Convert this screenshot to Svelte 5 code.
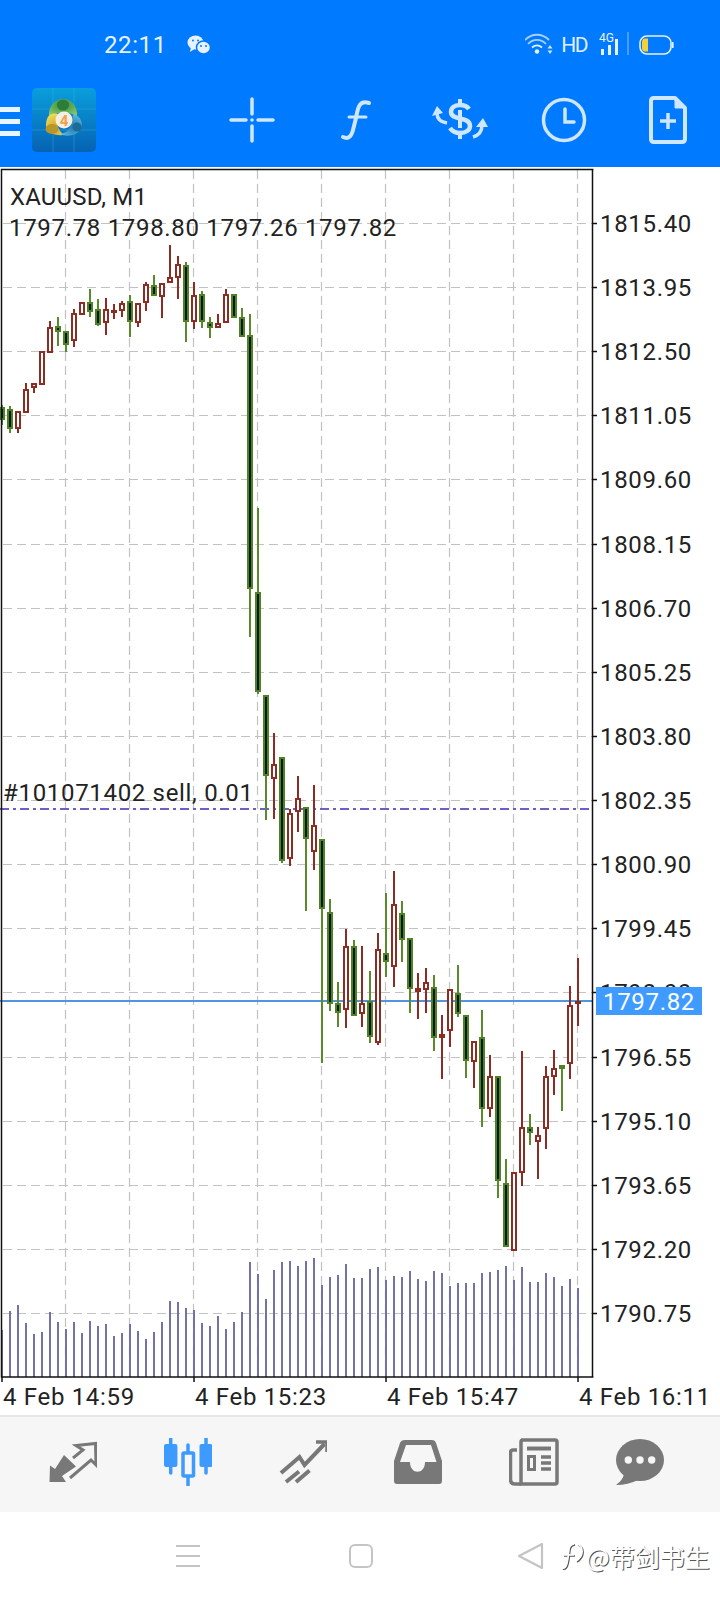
<script lang="ts">
  // candles: [kind, high, body top, body bottom, low], 8px apart, pixel coords of the page
  type candle = [string, number, number, number, number];
  const candles: candle[] = [
    ['d',405,407,420,425],['d',406,409,429,433],['u',411,411,429,433],['u',383,389,413,413],
    ['u',383,383,388,393],['u',351,351,385,385],['u',321,327,353,353],['d',317,326,332,346],
    ['d',331,331,345,352],['u',309,313,341,347],['u',302,302,315,315],['d',289,302,312,317],
    ['d',299,309,325,326],['u',298,309,323,335],['u',304,310,313,319],['u',301,303,311,317],
    ['d',295,301,322,337],['u',303,303,323,327],['u',282,284,303,311],['d',275,285,296,296],
    ['u',283,283,297,318],['u',245,277,283,283],['u',256,264,278,299],['d',262,265,322,342],
    ['u',282,295,322,329],['d',291,294,322,328],['d',317,322,328,338],['u',314,323,328,328],
    ['u',289,294,323,323],['d',294,294,318,318],['d',308,317,337,337],['d',314,335,589,637],
    ['d',508,592,692,694],['d',695,695,776,820],['u',733,764,779,819],['d',757,757,861,863],
    ['u',809,813,859,866],['u',776,798,812,832],['d',807,807,839,911],['u',785,825,852,870],
    ['d',839,839,909,1063],['d',899,912,1004,1011],['d',982,1003,1013,1027],['u',929,946,1010,1028],
    ['d',940,946,1016,1016],['u',946,1003,1014,1027],['d',971,1001,1037,1043],['u',933,949,1043,1045],
    ['d',893,953,962,977],['u',871,904,967,987],['d',901,913,940,962],['d',938,938,989,1013],
    ['u',973,988,992,1019],['u',968,982,990,1013],['d',975,987,1038,1051],['u',1015,1034,1038,1079],
    ['u',989,989,1031,1047],['d',965,993,1014,1017],['d',1015,1015,1061,1078],['u',1041,1041,1062,1088],
    ['d',1010,1037,1109,1127],['u',1055,1076,1109,1117],['d',1076,1076,1181,1198],['d',1159,1183,1247,1247],
    ['u',1172,1172,1251,1251],['u',1051,1127,1173,1186],['d',1114,1127,1133,1145],['u',1127,1135,1142,1179],
    ['u',1066,1076,1129,1149],['u',1050,1068,1077,1095],['d',1065,1065,1069,1111],['u',986,1005,1064,1079],
    ['u',958,1001,1004,1026]
  ];
  const volumes = [
    1330,1311,1305,1323,1334,1332,1312,1322,1329,1322,1333,1321,1326,1324,1336,1333,1324,1331,1339,1332,
    1322,1301,1302,1308,1310,1323,1326,1316,1329,1322,1312,1262,1274,1299,1270,1262,1261,1266,1261,1258,
    1285,1277,1275,1264,1278,1278,1269,1267,1280,1276,1277,1271,1279,1281,1271,1273,1286,1283,1283,1283,
    1273,1272,1270,1266,1280,1267,1282,1282,1273,1277,1286,1279,1288
  ];
  const cx = (k: number) => 2 + 8 * k;
  const gridX = [1, 2, 3, 4, 5, 6, 7, 8, 9].map((k) => 1.5 + 64 * k);
  const levels = Array.from({ length: 18 }, (_, i) => ({
    y: Math.round(223 + 64.12 * i) + 0.5,
    label: (1815.4 - 1.45 * i).toFixed(2)
  }));
  const times = [
    { x: 2, label: '4 Feb 14:59' },
    { x: 194, label: '4 Feb 15:23' },
    { x: 386, label: '4 Feb 15:47' },
    { x: 578, label: '4 Feb 16:11' }
  ];
</script>

<div class="page">
  <header class="top">
    <div class="status">
      <span class="clock">22:11</span>
      <svg class="wechat" width="24" height="20" viewBox="0 0 24 20">
        <ellipse cx="8.5" cy="7.5" rx="8" ry="7" fill="#e6f2ff" />
        <path d="M4 12 L3 17 L9 13 Z" fill="#e6f2ff" />
        <circle cx="6" cy="5.5" r="1" fill="#007aff" />
        <circle cx="11" cy="5.5" r="1" fill="#007aff" />
        <ellipse cx="16.5" cy="12.5" rx="7" ry="6.5" fill="#e6f2ff" stroke="#007aff" stroke-width="1.5" />
        <circle cx="14" cy="11" r="1" fill="#007aff" />
        <circle cx="19" cy="11" r="1" fill="#007aff" />
      </svg>
      <span class="spring"></span>
      <svg class="wifi" width="28" height="22" viewBox="0 0 28 22" fill="none" stroke="#a9d0ff" stroke-width="1.8">
        <path d="M0 7 C7 0 17 0 24 7" />
        <path d="M3 11 C8 5.5 16 5.5 21 11" />
        <path d="M7 14.5 C10 12 14 12 17 14.5" stroke="#e6f2ff" />
        <circle cx="12" cy="18.5" r="2.2" fill="#e6f2ff" stroke="none" />
        <path d="M25 12 L27.5 15.5 H22.5 Z M25 21 L27.5 17.5 H22.5 Z" fill="#cfe6ff" stroke="none" />
      </svg>
      <span class="hd">HD</span>
      <svg class="signal" width="30" height="24" viewBox="0 0 30 24">
        <text x="0" y="10" class="lte">4G</text>
        <rect x="2" y="17" width="3" height="6" fill="#e6f2ff" />
        <rect x="9" y="13" width="3" height="10" fill="#e6f2ff" />
        <rect x="16" y="7" width="3" height="16" fill="#e6f2ff" />
        <rect x="28" y="0" width="2" height="23" fill="#4c9dff" />
      </svg>
      <svg class="battery" width="35" height="20" viewBox="0 0 35 20">
        <rect x="1" y="1" width="31" height="18" rx="7" fill="none" stroke="#e6f2ff" stroke-width="1.6" />
        <rect x="33" y="7" width="1.6" height="6" fill="#e6f2ff" />
        <path d="M9 3.5 H6 Q3 3.5 3 7 V13 Q3 16.5 6 16.5 H9 Z" fill="#f5d03c" />
      </svg>
    </div>
    <div class="toolbar">
      <div class="burger"><i></i><i></i><i></i></div>
      <svg class="logo" width="64" height="64" viewBox="0 0 64 64">
        <defs>
          <linearGradient id="lg" x1="0" y1="0" x2="0" y2="1">
            <stop offset="0" stop-color="#0a9fdc" />
            <stop offset="1" stop-color="#0662b2" />
          </linearGradient>
          <radialGradient id="gr" cx="0.5" cy="0.3" r="0.7">
            <stop offset="0" stop-color="#2f8f3f" />
            <stop offset="1" stop-color="#8cc66a" />
          </radialGradient>
          <radialGradient id="yl" cx="0.5" cy="0.7" r="0.7">
            <stop offset="0" stop-color="#c9a62c" />
            <stop offset="1" stop-color="#f0da5a" />
          </radialGradient>
          <radialGradient id="bl" cx="0.6" cy="0.6" r="0.7">
            <stop offset="0" stop-color="#1e7cae" />
            <stop offset="1" stop-color="#6cc0e6" />
          </radialGradient>
        </defs>
        <rect width="64" height="64" rx="5" fill="url(#lg)" />
        <path d="M21 0V64M42 0V64M0 21H64M0 42H64" stroke="#4bb4e6" stroke-width="1" opacity="0.35" />
        <path d="M17 29 C16 17 24 11 31 11 C39 11 46 18 45 29 C40 23 24 23 17 29 Z" fill="url(#gr)" />
        <ellipse cx="31" cy="17" rx="6" ry="5.5" fill="#2c7d3a" />
        <path d="M26 26 C17 24 14 30 14 38 C13 44 22 48 32 47 C26 42 23 35 26 26 Z" fill="url(#yl)" />
        <ellipse cx="20" cy="41" rx="6.5" ry="5" fill="#b8962a" />
        <path d="M41 26 C49 28 52 36 48 42 C44 48 35 49 28 46 C37 45 41 37 41 26 Z" fill="url(#bl)" />
        <circle cx="45" cy="39" r="4.5" fill="#1b6a98" />
        <circle cx="32" cy="32" r="8.5" fill="#f4efe4" />
        <text x="32" y="37.5" class="four">4</text>
      </svg>
      <div class="tools">
        <svg width="48" height="48" viewBox="0 0 48 48" fill="none" stroke="#cfe6ff" stroke-width="3.5" stroke-linecap="round">
          <path d="M24 3V18M24 30V45M3 24H18M30 24H45" />
          <circle cx="24" cy="24" r="1.8" fill="#cfe6ff" stroke="none" />
        </svg>
        <svg width="48" height="48" viewBox="0 0 48 48" fill="none" stroke="#cfe6ff" stroke-width="4" stroke-linecap="round">
          <path d="M37 7 C28 4 26 10 24 22 L21 34 C19 42 15 43 11 41" />
          <path d="M17 21 H34" stroke-width="3" />
        </svg>
        <svg width="56" height="48" viewBox="0 0 56 48" fill="none" stroke="#cfe6ff" stroke-width="3.5">
          <path d="M28 3V9M28 14V32M28 37V43" stroke-width="4" />
          <path d="M37 13 C35 10 32 9 28 9 C22 9 19 12 19 16 C19 25 38 20 38 30 C38 34 34 37 28 37 C24 37 20 35 18 32" stroke-width="4.5" />
          <path d="M15 27 C8 26 5 23 5 17" stroke-width="3.5" />
          <path d="M0 20 L5 10 L11 17 Z" fill="#cfe6ff" stroke="none" />
          <path d="M41 41 C48 39 50 34 50 29" stroke-width="3.5" />
          <path d="M44 31 L51 22 L56 31 Z" fill="#cfe6ff" stroke="none" />
        </svg>
        <svg width="48" height="48" viewBox="0 0 48 48" fill="none" stroke="#cfe6ff" stroke-width="3.5">
          <circle cx="24" cy="24" r="20.5" />
          <path d="M25 13V26H34" stroke-linecap="round" />
        </svg>
        <svg width="48" height="48" viewBox="0 0 48 48" fill="none" stroke="#cfe6ff" stroke-width="4" stroke-linejoin="round">
          <path d="M10 2 H31 L41 12 V43 Q41 46 38 46 H10 Q7 46 7 43 V5 Q7 2 10 2 Z" />
          <path d="M31 2 L41 12 H31 Z" fill="#cfe6ff" stroke-width="1" />
          <path d="M24 17V33M16 25H32" stroke-width="3.5" />
        </svg>
      </div>
    </div>
  </header>

  <svg class="chart" width="720" height="1248" viewBox="0 167 720 1248">
    <g class="grid">
      {#each gridX as x}
        <line x1={x} y1="170" x2={x} y2="1377" />
      {/each}
      {#each levels as l}
        <line x1="3" y1={l.y} x2="592" y2={l.y} />
      {/each}
    </g>

    {#each volumes as top, k}
      <rect class="vol" x={cx(k) - 1} y={top} width="2" height={1377 - top} />
    {/each}

    <line class="order" x1="0" y1="809" x2="592" y2="809" />
    <line class="last" x1="0" y1="1001" x2="593" y2="1001" />

    {#each candles as [kind, high, top, bottom, low], k}
      <g class={kind === 'u' ? 'up' : 'down'}>
        <line class="wick" x1={cx(k)} y1={high} x2={cx(k)} y2={low} />
        <rect x={cx(k) - 2} y={top + 1} width="4" height={Math.max(bottom - top - 2, 1)} />
      </g>
    {/each}

    <path class="frame" d="M593.5 169.5 H1.5 V1377 H593.5 M592.5 169 V1377" />
    {#each levels as l}
      <line class="tick" x1="592" y1={l.y} x2="597" y2={l.y} />
    {/each}
    {#each times as t}
      <line class="tick" x1={t.x} y1="1377" x2={t.x} y2="1382" />
    {/each}

    <text class="label symbol" x="10" y="205">XAUUSD, M1</text>
    <text class="label" x="9" y="236">1797.78 1798.80 1797.26 1797.82</text>
    <text class="label" x="3" y="801">#101071402 sell, 0.01</text>

    {#each levels as l}
      <text class="label" x="600" y={l.y + 8.5}>{l.label}</text>
    {/each}
    {#each times as t}
      <text class="label" x={t.x + 1} y="1405">{t.label}</text>
    {/each}

    <rect class="tag" x="596" y="987" width="106" height="28" />
    <text class="label tagtext" x="603" y="1010">1797.82</text>
  </svg>

  <nav class="tabs">
    <svg width="48" height="48" viewBox="0 0 48 48" fill="none" stroke="#787878">
      <path d="M0.5 44 L1 27.5 L6 31 L15 17 L27 28.5 L13 38 L17 44 Z" fill="#787878" stroke="none" />
      <path d="M24 20 L34 12 L27 7.5 L46.5 5.5 L47 27 L42 22 L21 40" stroke-width="3" />
    </svg>
    <svg width="48" height="48" viewBox="0 0 48 48" fill="none" stroke="#3d9bff" stroke-width="3.5">
      <path d="M6.7 0V35M42 0V35M24 7V48" stroke-linecap="round" />
      <rect x="0" y="6" width="13.4" height="23" rx="2" fill="#3d9bff" stroke="none" />
      <rect x="35.5" y="6" width="13" height="23" rx="2" fill="#3d9bff" stroke="none" />
      <rect x="19" y="15" width="10.5" height="23" rx="1" fill="#f6f6f6" />
    </svg>
    <svg width="48" height="48" viewBox="0 0 48 48" fill="none" stroke="#787878" stroke-width="4">
      <path d="M2 35 L20.5 19 L25.5 27 L45.5 6" />
      <path d="M37 4 H48 V14" stroke-width="3.5" />
      <path d="M7 44 L20 33.5 M17 44 L30.5 32.5" />
    </svg>
    <svg width="48" height="48" viewBox="0 0 48 48">
      <path fill="#787878" fill-rule="evenodd" d="M11 2 H38 Q41 2 42 5 L48 23 V43 Q48 46 45 46 H3 Q0 46 0 43 V23 L6 5 Q7 2 11 2 Z M12 7 L6 24 H16 C16 37 31 37 31 24 H42.5 L37 7 Z" />
    </svg>
    <svg width="50" height="48" viewBox="0 0 50 48" fill="none" stroke="#787878">
      <path d="M12 2 H46 Q48 2 48 4 V44 Q48 46 46 46 H12 Q12 46 12 44 V4 Q12 2 14 2" stroke-width="3.5" />
      <path d="M8 12 H4 Q1.5 12 1.5 15 V41 Q1.5 46 6 46 H12" stroke-width="3.5" />
      <path d="M18 10.5 H42" stroke-width="4" />
      <rect x="19.5" y="18.5" width="6" height="13" stroke-width="3" />
      <path d="M32 19 H42M32 25 H42M32 31 H42" stroke-width="3.5" />
    </svg>
    <svg class="chat" width="48" height="48" viewBox="0 0 48 48">
      <ellipse cx="24" cy="22" rx="24" ry="21" fill="#787878" />
      <path d="M8 36 Q7 42 0 47 Q12 47 22 42 Z" fill="#787878" />
      <circle cx="12.3" cy="22" r="3.7" fill="#f6f6f6" />
      <circle cx="24" cy="22" r="3.7" fill="#f6f6f6" />
      <circle cx="35.7" cy="22" r="3.7" fill="#f6f6f6" />
    </svg>
  </nav>

  <footer class="nav">
    <svg width="26" height="24" viewBox="0 0 26 24" stroke="#c4c4c4" stroke-width="2">
      <path d="M1 2H25M1 12H25M1 22H25" />
    </svg>
    <svg class="home" width="26" height="26" viewBox="0 0 26 26" fill="none" stroke="#c4c4c4" stroke-width="2">
      <rect x="2" y="2" width="22" height="22" rx="5" />
    </svg>
    <svg class="back" width="28" height="28" viewBox="0 0 28 28" fill="none" stroke="#c4c4c4" stroke-width="2.2" stroke-linejoin="round">
      <path d="M25 2 V26 L2 14 Z" />
    </svg>
    <div class="mark">
      <svg width="26" height="32" viewBox="0 0 26 32" fill="none" stroke="#fff" stroke-width="1.6">
        <path d="M14 4 C8 4 9 12 8 18 C7 26 5 29 2 28" />
        <path d="M17 4 C24 6 24 16 16 21 M3 15 H14" />
      </svg>
      <span>@带剑书生</span>
    </div>
  </footer>
</div>

<style>
  :global(body) {
    background: #fff;
  }
  .page {
    width: 720px;
    height: 1600px;
    overflow: hidden;
    font-family: Roboto, "Noto Sans", sans-serif;
  }
  svg {
    display: block;
    flex: none;
  }
  .top {
    height: 167px;
    background: #007aff;
  }
  .status {
    height: 90px;
    display: flex;
    align-items: center;
    padding-left: 104px;
    box-sizing: border-box;
  }
  .clock {
    font-size: 24px;
    letter-spacing: 0.6px;
    color: #e6f2ff;
  }
  .wechat {
    margin-left: 20px;
  }
  .spring {
    flex: 1;
  }
  .hd {
    margin-left: 8px;
    font-size: 21px;
    letter-spacing: -1.5px;
    color: #e0efff;
  }
  .wifi {
    margin-bottom: 2px;
  }
  .signal {
    margin-left: 12px;
    margin-bottom: 2px;
  }
  .lte {
    font-size: 12px;
    fill: #e6f2ff;
  }
  .battery {
    margin-left: 10px;
    margin-right: 46px;
  }
  .toolbar {
    height: 77px;
    display: flex;
    align-items: flex-start;
  }
  .burger {
    width: 20px;
    margin-top: 17px;
    margin-right: 12px;
    display: flex;
    flex-direction: column;
    gap: 7px;
  }
  .burger i {
    display: block;
    height: 5px;
    background: #eaf4ff;
  }
  .logo {
    margin-top: -2px;
  }
  .tools {
    margin-left: 104px;
    margin-top: 6px;
    display: grid;
    grid-template-columns: repeat(5, 104px);
    justify-items: center;
  }
  .four {
    font-size: 15px;
    font-weight: 700;
    fill: #f0a24a;
    text-anchor: middle;
  }
  .chart {
    background: #fff;
  }
  .grid line {
    stroke: #c2c2c2;
    stroke-width: 1.2;
    stroke-dasharray: 9 5;
  }
  .vol {
    fill: #7272a8;
  }
  .order {
    stroke: #6a60c8;
    stroke-width: 2;
    stroke-dasharray: 9 4 3 4;
  }
  .last {
    stroke: #4f95e0;
    stroke-width: 2;
  }
  .wick {
    stroke-width: 2;
  }
  .up .wick {
    stroke: #8c2d24;
  }
  .down .wick {
    stroke: #5a8a2c;
  }
  .up rect {
    fill: #fff;
    stroke: #8c2d24;
    stroke-width: 2;
  }
  .down rect {
    fill: #0a1a0a;
    stroke: #4f8225;
    stroke-width: 2;
  }
  .frame,
  .tick {
    fill: none;
    stroke: #111;
    stroke-width: 1.5;
  }
  .label {
    font-family: Roboto, sans-serif;
    font-size: 24px;
    letter-spacing: 0.68px;
    fill: #222;
  }
  .symbol {
    letter-spacing: 0.15px;
  }
  .tag {
    fill: #3f9bff;
  }
  .tagtext {
    fill: #fff;
  }
  .tabs {
    height: 97px;
    box-sizing: border-box;
    background: #f6f6f6;
    border-top: 2px solid #e6e6e6;
    padding: 21px 0 0 49px;
    display: flex;
    align-items: flex-start;
    gap: 67px;
  }
  .chat {
    margin-left: -10px;
  }
  .nav {
    height: 88px;
    background: #fff;
    display: flex;
    align-items: center;
    padding-left: 175px;
    box-sizing: border-box;
  }
  .home {
    margin-left: 147px;
  }
  .back {
    margin-left: 143px;
  }
  .mark {
    margin-left: 15px;
    display: flex;
    align-items: center;
    color: #fff;
    font-family: "Noto Sans CJK SC", Roboto, sans-serif;
    font-size: 25px;
    text-shadow: 1px 1px 0 #555;
  }
  .mark svg {
    filter: drop-shadow(1px 1px 0 #555);
  }
</style>
